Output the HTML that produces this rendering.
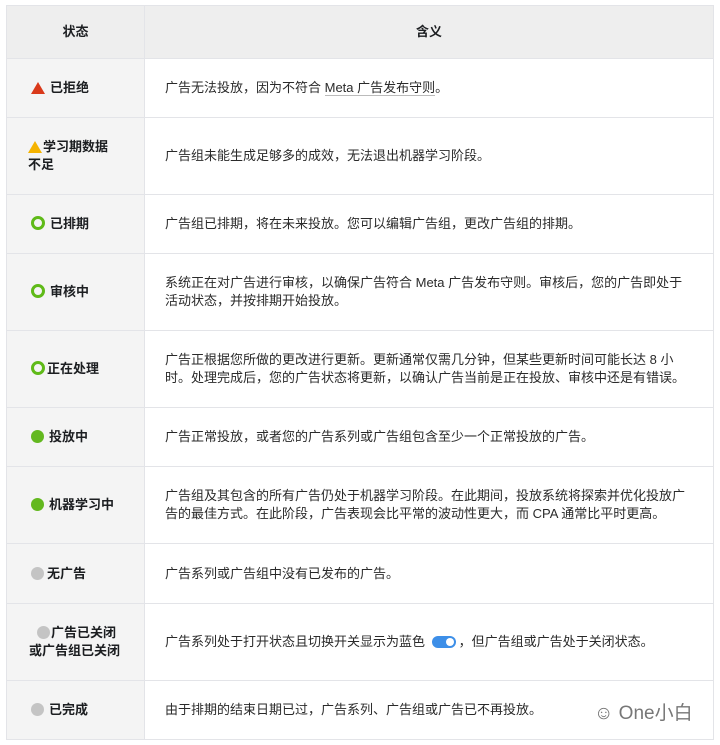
<!DOCTYPE html><html><head><meta charset="utf-8"><style>
body{margin:0;background:#fff;font-family:"Liberation Sans","Noto Sans CJK SC",sans-serif;color:#1c1e21}
.t{position:absolute;left:6px;top:5px;width:708px;border-collapse:collapse;table-layout:fixed}
td{border:1px solid #e3e4e8;font-size:13px;line-height:18px;vertical-align:middle;padding:0}
td.l{width:137px;background:#f4f4f4;font-weight:bold;padding-left:24px;box-sizing:border-box}
td.r{padding:0 20px 0 20px;color:#2a2a2a}
tr.h td{background:#eeeeee;text-align:center;font-weight:bold;padding:0}
.ic{display:inline-block;vertical-align:-2px;margin-right:5px}
.ring{width:8px;height:8px;border:3px solid #5fba18;border-radius:50%}
.dot{width:13px;height:13px;border-radius:50%;background:#63b81f}
.g{width:13px;height:13px;border-radius:50%;background:#c4c4c4}
.tri{width:0;height:0;border-left:7px solid transparent;border-right:7px solid transparent;border-bottom:12px solid #d9391a}
.u{border-bottom:1px solid #bbb}
.sw{display:inline-block;width:24px;height:12px;border-radius:7px;background:#3d8fe8;vertical-align:-2px;position:relative;margin:0 3px}
.sw:after{content:"";position:absolute;right:2px;top:2px;width:8px;height:8px;border-radius:50%;background:#fff}
.wm{position:absolute;left:594px;top:698px;font-size:19px;color:#777}
</style></head><body>
<table class="t">
<tr class="h" style="height:53px"><td style="width:137px">状态</td><td>含义</td></tr>
<tr style="height:59px"><td class="l"><span class="ic tri"></span>已拒绝</td><td class="r">广告无法投放，因为不符合 <span class="u">Meta 广告发布守则</span>。</td></tr>
<tr style="height:77px"><td class="l" style="padding-left:21px"><span class="ic tri" style="border-bottom-color:#f5b300;margin-right:1px"></span>学习期数据<br>不足</td><td class="r">广告组未能生成足够多的成效，无法退出机器学习阶段。</td></tr>
<tr style="height:59px"><td class="l"><span class="ic ring"></span>已排期</td><td class="r">广告组已排期，将在未来投放。您可以编辑广告组，更改广告组的排期。</td></tr>
<tr style="height:77px"><td class="l"><span class="ic ring"></span>审核中</td><td class="r">系统正在对广告进行审核，以确保广告符合 Meta 广告发布守则。审核后，您的广告即处于<br>活动状态，并按排期开始投放。</td></tr>
<tr style="height:77px"><td class="l"><span class="ic ring" style="margin-right:2px"></span>正在处理</td><td class="r">广告正根据您所做的更改进行更新。更新通常仅需几分钟，但某些更新时间可能长达 8 小<br>时。处理完成后，您的广告状态将更新，以确认广告当前是正在投放、审核中还是有错误。</td></tr>
<tr style="height:59px"><td class="l"><span class="ic dot"></span>投放中</td><td class="r">广告正常投放，或者您的广告系列或广告组包含至少一个正常投放的广告。</td></tr>
<tr style="height:77px"><td class="l"><span class="ic dot"></span>机器学习中</td><td class="r">广告组及其包含的所有广告仍处于机器学习阶段。在此期间，投放系统将探索并优化投放广<br>告的最佳方式。在此阶段，广告表现会比平常的波动性更大，而 CPA 通常比平时更高。</td></tr>
<tr style="height:60px"><td class="l"><span class="ic g" style="margin-right:3px"></span>无广告</td><td class="r">广告系列或广告组中没有已发布的广告。</td></tr>
<tr style="height:77px"><td class="l" style="padding-left:22px"><span class="ic g" style="margin-right:1px;margin-left:8px"></span>广告已关闭<br>或广告组已关闭</td><td class="r">广告系列处于打开状态且切换开关显示为蓝色 <span class="sw"></span>，但广告组或广告处于关闭状态。</td></tr>
<tr style="height:59px"><td class="l"><span class="ic g"></span>已完成</td><td class="r">由于排期的结束日期已过，广告系列、广告组或广告已不再投放。</td></tr>
</table>
<div class="wm">☺ One小白</div>
</body></html>
